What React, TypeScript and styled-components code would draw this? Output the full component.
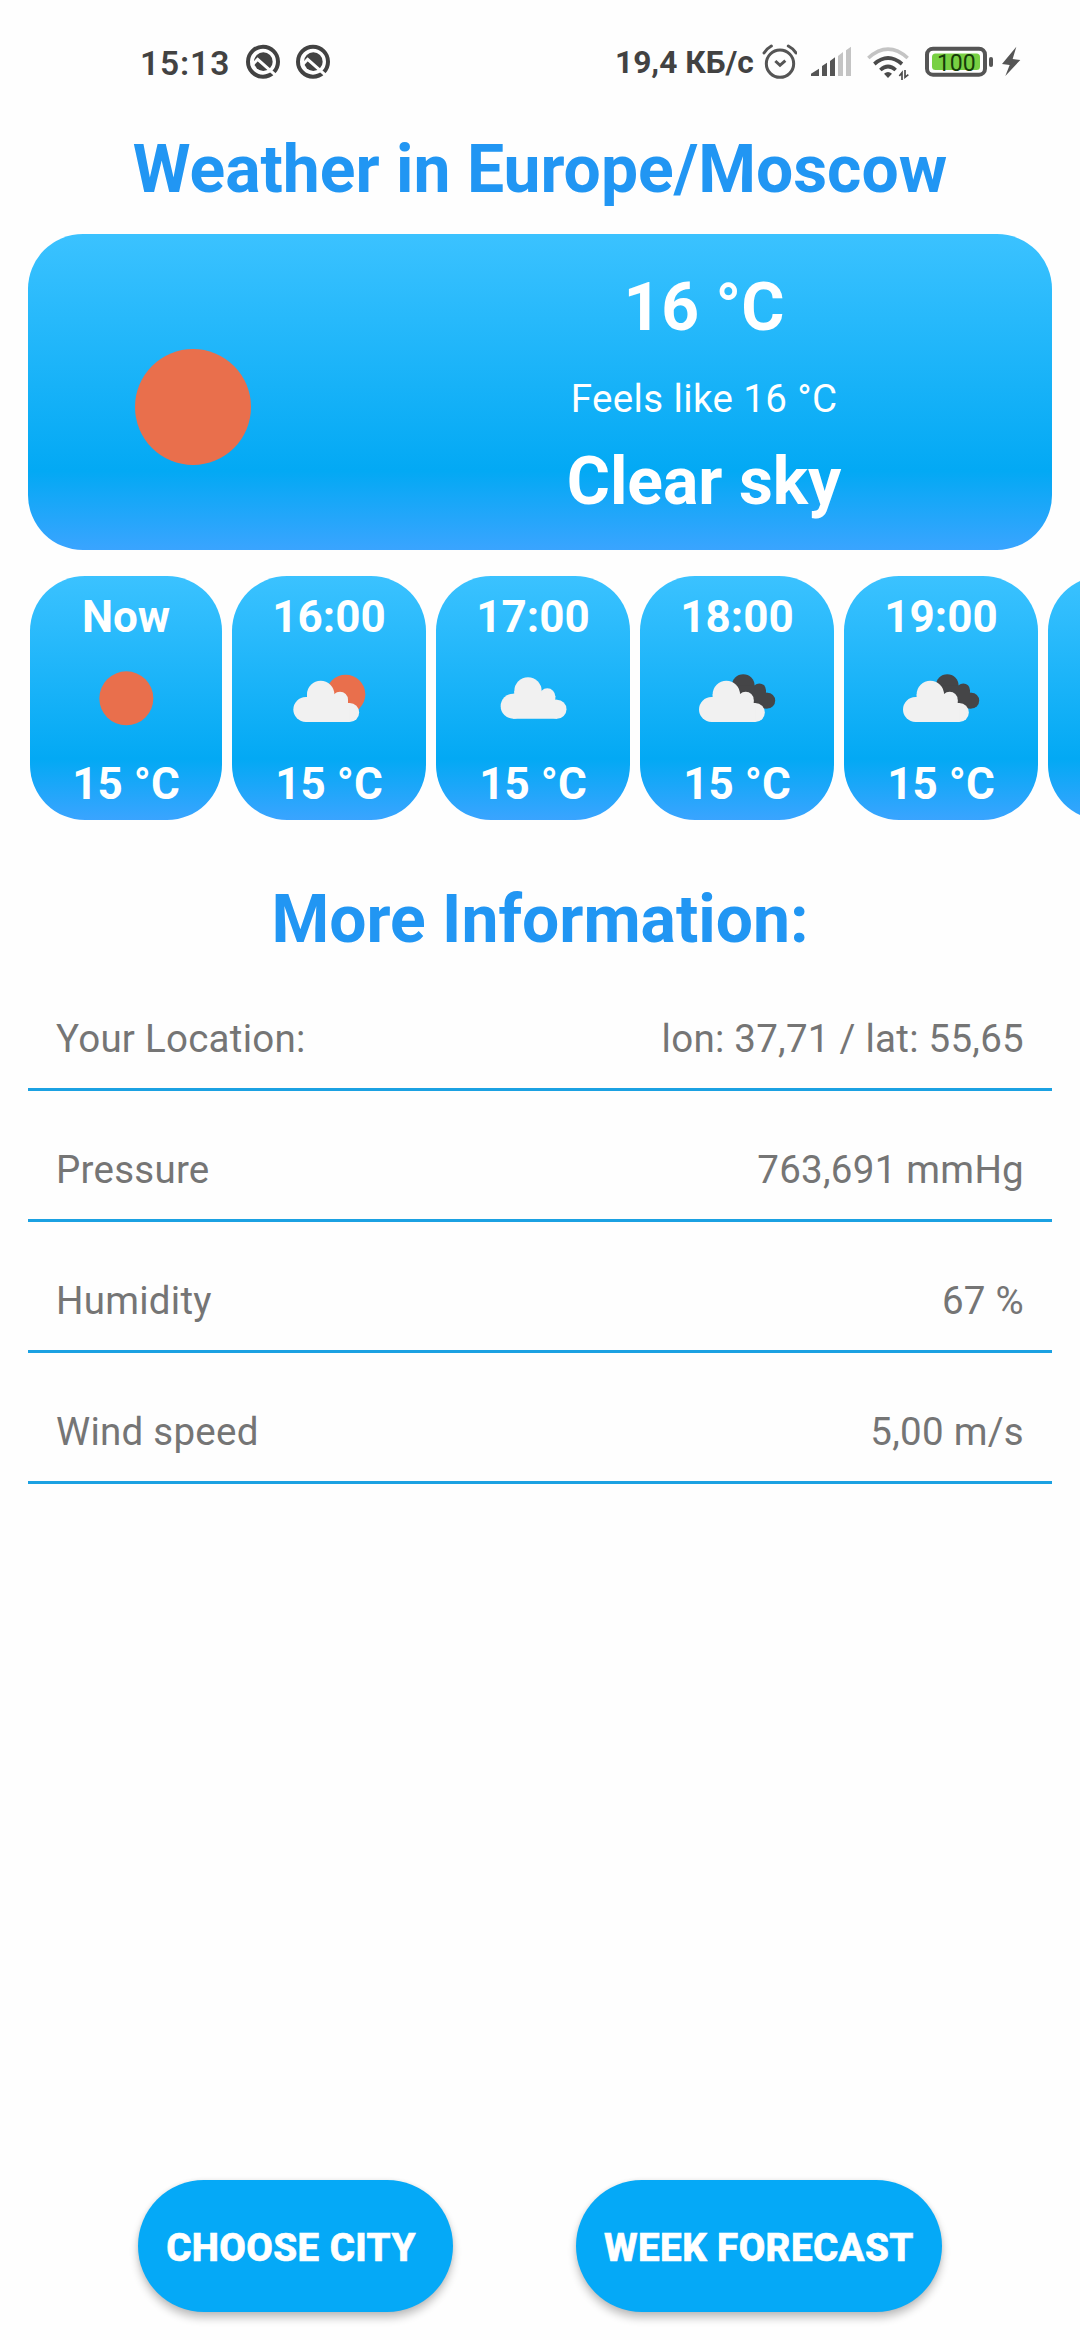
import React from 'react';
import styled, { createGlobalStyle } from 'styled-components';

const GlobalStyle = createGlobalStyle`
  * { box-sizing: border-box; }
  body {
    margin: 0;
    background: #fefefe;
    font-family: Roboto, "Noto Sans", sans-serif;
  }
`;

const skyGradient = 'linear-gradient(180deg, #3bc2ff 0%, #03a9f4 75%, #3aa4ff 100%)';

const Screen = styled.main`
  width: 1080px;
  height: 2340px;
  display: flex;
  flex-direction: column;
  overflow: hidden;
  background: #fefefe;
`;

const StatusBar = styled.header`
  height: 125px;
  flex: none;
  display: flex;
  justify-content: space-between;
  align-items: flex-start;
  padding: 40px 59px 0 140px;
  color: #424242;
`;

const StatusGroup = styled.div`
  display: flex;
  height: 46px;
`;

const Clock = styled.span`
  width: 106px;
  font-size: 33.5px;
  font-weight: 600;
  line-height: 47px;
  letter-spacing: 0.9px;
  white-space: nowrap;
`;

const NetSpeed = styled.span`
  width: 147px;
  font-size: 31.7px;
  font-weight: 700;
  line-height: 46px;
  white-space: nowrap;
`;

const StatusIcon = styled.svg<{ $gap?: number }>`
  flex: none;
  display: block;
  margin-right: ${({ $gap = 0 }) => $gap}px;
`;

const Heading = styled.h1<{ $top?: number; $line: number }>`
  margin: ${({ $top = 0 }) => $top}px 0 0;
  font-size: 66px;
  font-weight: 700;
  line-height: ${({ $line }) => $line}px;
  text-align: center;
  color: #2196f3;
  white-space: nowrap;
`;

const CurrentCard = styled.section`
  flex: none;
  height: 316px;
  margin: 19px 28px 0;
  border-radius: 55px;
  background: ${skyGradient};
  display: grid;
  grid-template-columns: 328px 1fr;
  color: #fff;
`;

const CurrentIcon = styled.div`
  display: flex;
  align-items: center;
  justify-content: center;
  padding: 30px 0 0 2px;
`;

const SunDisc = styled.div`
  width: 116px;
  height: 116px;
  border-radius: 50%;
  background: #e96f4c;
`;

const CurrentText = styled.div`
  display: flex;
  flex-direction: column;
  align-items: center;
  padding-top: 29px;
`;

const Big = styled.div`
  font-size: 66px;
  font-weight: 700;
  line-height: 90px;
`;

const FeelsLike = styled.div`
  margin: 16px 0 8px;
  font-size: 38.5px;
  letter-spacing: 0.38px;
  line-height: 60px;
`;

const HourStrip = styled.section`
  flex: none;
  display: flex;
  gap: 10px;
  margin-top: 26px;
  padding-left: 30px;
  overflow: hidden;
`;

const HourCard = styled.article<{ $width?: number }>`
  flex: none;
  width: ${({ $width = 194 }) => $width}px;
  height: 244px;
  padding-top: 11px;
  border-radius: 55px;
  background: ${skyGradient};
  display: flex;
  flex-direction: column;
  align-items: center;
  color: #fff;
`;

const HourText = styled.div`
  font-size: 44px;
  font-weight: 700;
  line-height: 60px;
  white-space: nowrap;
`;

const InfoList = styled.section`
  flex: none;
  margin: 0 28px;
`;

const InfoRow = styled.div`
  height: 131px;
  padding: 29px 28px 0;
  border-bottom: 3px solid #1ba1e2;
  display: flex;
  justify-content: space-between;
  align-items: center;
  font-size: 38.5px;
  letter-spacing: 0.26px;
  color: #757575;
`;

const Actions = styled.footer`
  margin-top: auto;
  padding: 0 138px 28px;
  display: flex;
  justify-content: space-between;
`;

const ActionButton = styled.button<{ $width: number; $inset?: number }>`
  width: ${({ $width }) => $width}px;
  height: 132px;
  padding: 2px ${({ $inset = 0 }) => $inset}px 0 0;
  border: 0;
  border-radius: 66px;
  background: #05a9f7;
  box-shadow: 0 6px 8px rgba(0, 0, 0, 0.24), 0 0 4px rgba(0, 0, 0, 0.08);
  color: #fff;
  font-family: inherit;
  font-size: 38.5px;
  font-weight: 800;
  letter-spacing: 0.42px;
  -webkit-text-stroke: 0.6px #fff;
  white-space: nowrap;
`;

type Sky = 'sun' | 'partly' | 'cloud' | 'broken';

const Cloud = () => (
  <>
    <circle cx="80.5" cy="187.5" r="37.5" />
    <circle cx="125" cy="142" r="41" />
    <circle cx="183" cy="158" r="24" />
    <circle cx="212" cy="196.5" r="28.5" />
    <path d="M84 142H166V158H207V168H212V225H80.5V150H84Z" />
  </>
);

const SkyIcon = ({ kind }: { kind: Sky }) => (
  <svg width="100" height="107" viewBox="0 0 300 321">
    {kind === 'sun' && <circle cx="151" cy="154" r="81" fill="#e96f4c" />}
    {kind === 'partly' && <circle cx="200" cy="142" r="59" fill="#e96f4c" />}
    {kind === 'broken' && (
      <g fill="#454547" transform="translate(65 -2) scale(.83)"><Cloud /></g>
    )}
    {kind !== 'sun' && (
      <g
        fill="#f1f1f1"
        transform={kind === 'cloud' ? 'translate(10 -10)' : kind === 'broken' ? 'translate(-7 0)' : undefined}
      >
        <Cloud />
      </g>
    )}
  </svg>
);

const SystemIcon = ({ gap }: { gap: number }) => (
  <StatusIcon $gap={gap} width="34" height="46" viewBox="0 0 102 138">
    <circle cx="51" cy="65" r="45" fill="none" stroke="#424242" strokeWidth="12" />
    <circle cx="52" cy="65" r="28" fill="#424242" />
    <path d="M16 78L35 58L97 113" fill="none" stroke="#fefefe" strokeWidth="9" />
  </StatusIcon>
);

const hours: { time: string; sky: Sky; temp: string }[] = [
  { time: 'Now', sky: 'sun', temp: '15 °C' },
  { time: '16:00', sky: 'partly', temp: '15 °C' },
  { time: '17:00', sky: 'cloud', temp: '15 °C' },
  { time: '18:00', sky: 'broken', temp: '15 °C' },
  { time: '19:00', sky: 'broken', temp: '15 °C' },
];

const details = [
  ['Your Location:', 'lon: 37,71 / lat: 55,65'],
  ['Pressure', '763,691 mmHg'],
  ['Humidity', '67 %'],
  ['Wind speed', '5,00 m/s'],
];

export default function App() {
  return (
    <>
      <GlobalStyle />
      <Screen>
        <StatusBar>
          <StatusGroup>
            <Clock>15:13</Clock>
            <SystemIcon gap={16} />
            <SystemIcon gap={0} />
          </StatusGroup>
          <StatusGroup>
            <NetSpeed>19,4 КБ/с</NetSpeed>
            <StatusIcon $gap={14} width="35" height="46" viewBox="0 0 105 138" fill="none" stroke="#555" strokeLinecap="round">
              <circle cx="54" cy="71" r="41" strokeWidth="9" />
              <path d="M40 63L54 76L70 62" strokeWidth="9" strokeLinejoin="miter" strokeLinecap="butt" />
              <path d="M6 39Q15 25 28 18M79 18Q93 25 102 39" strokeWidth="9" />
            </StatusIcon>
            <StatusIcon $gap={16} width="40" height="46" viewBox="0 0 120 138">
              <path d="M0 108V101L24 86V108ZM33 108V78L48 68V108ZM57 108V63L72 52V108Z" fill="#555" />
              <path d="M81 108V48L96 36V108ZM105 108V31L120 20V108Z" fill="#c4c4c4" />
            </StatusIcon>
            <StatusIcon $gap={15} width="43" height="46" viewBox="0 0 129 138" fill="none">
              <path d="M4 54Q63 1 122 54" stroke="#c4c4c4" strokeWidth="11" />
              <path d="M22 72Q63 36 105 72M40 90Q63 69 86 90" stroke="#4a4a4a" strokeWidth="11" />
              <path d="M51 101Q63 91 75 101L63 114Z" fill="#4a4a4a" />
              <path d="M105 120V98L97 108M114 90V112L124 104" stroke="#4a4a4a" strokeWidth="5" />
            </StatusIcon>
            <StatusIcon $gap={7} width="69" height="46" viewBox="0 0 69 46">
              <rect x="2" y="8.7" width="58" height="26" rx="6" fill="none" stroke="#555" strokeWidth="4" />
              <rect x="7" y="13.5" width="48" height="16.5" rx="3.5" fill="#78d043" />
              <rect x="64" y="17" width="4" height="10" rx="2" fill="#555" />
              <text x="31.3" y="30.5" textAnchor="middle" fontSize="23" fill="#173c0a" fontFamily="Roboto, sans-serif">100</text>
            </StatusIcon>
            <StatusIcon width="20" height="46" viewBox="0 0 60 138">
              <path d="M46 20L3 72L26 75L13 108L58 60L35 57Z" fill="#555" />
            </StatusIcon>
          </StatusGroup>
        </StatusBar>

        <Heading $line={90}>Weather in Europe/Moscow</Heading>

        <CurrentCard>
          <CurrentIcon><SunDisc /></CurrentIcon>
          <CurrentText>
            <Big>16 °C</Big>
            <FeelsLike>Feels like 16 °C</FeelsLike>
            <Big>Clear sky</Big>
          </CurrentText>
        </CurrentCard>

        <HourStrip>
          {hours.map((h, i) => (
            <HourCard key={h.time} $width={i === 0 ? 192 : 194}>
              <HourText>{h.time}</HourText>
              <SkyIcon kind={h.sky} />
              <HourText>{h.temp}</HourText>
            </HourCard>
          ))}
          <HourCard />
        </HourStrip>

        <Heading as="h2" $top={60} $line={80}>More Information:</Heading>

        <InfoList>
          {details.map(([label, value]) => (
            <InfoRow key={label}>
              <span>{label}</span>
              <span>{value}</span>
            </InfoRow>
          ))}
        </InfoList>

        <Actions>
          <ActionButton $width={315} $inset={9}>CHOOSE CITY</ActionButton>
          <ActionButton $width={366}>WEEK FORECAST</ActionButton>
        </Actions>
      </Screen>
    </>
  );
}
